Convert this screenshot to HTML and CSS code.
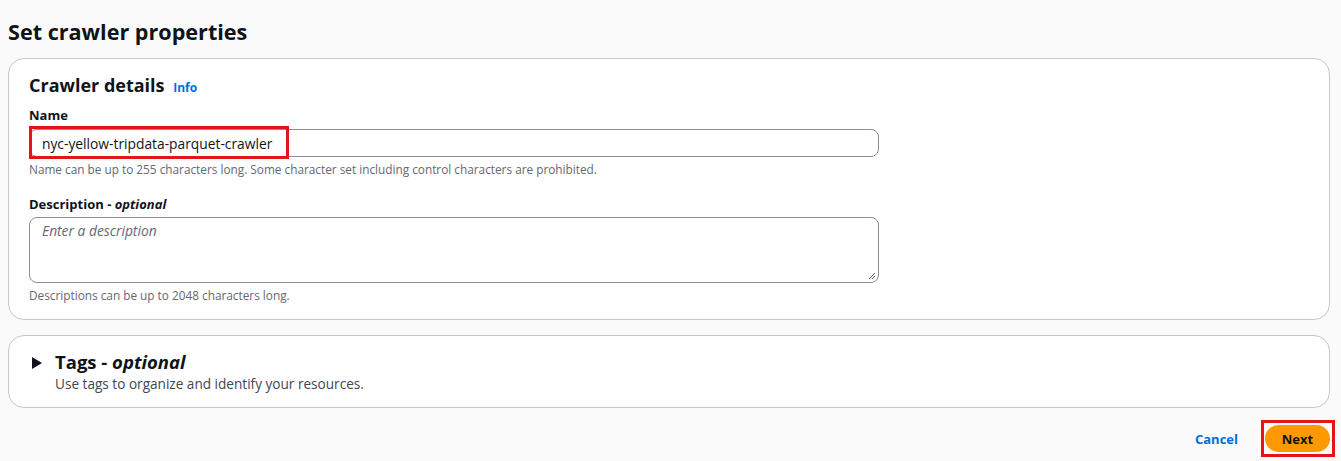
FILE: index.html
```html
<!DOCTYPE html>
<html>
<head>
<meta charset="utf-8">
<link rel="stylesheet" href="styles.css">
</head>
<body>
<main class="page">
  <h1 class="page-title">Set crawler properties</h1>
  <section class="card details">
    <h2 class="card-title">Crawler details <a class="info" href="#">Info</a></h2>
    <div class="field">
      <label class="label">Name</label>
      <div class="input">
        <span class="value">nyc-yellow-tripdata-parquet-crawler</span>
        <span class="hl"></span>
      </div>
      <div class="hint">Name can be up to 255 characters long. Some character set including control characters are prohibited.</div>
    </div>
    <div class="field desc">
      <label class="label">Description - <i>optional</i></label>
      <div class="textarea"><span class="placeholder">Enter a description</span>
        <svg class="grip" width="9" height="9" viewBox="0 0 9 9"><path d="M8 2 L2 8 M8 5 L5 8" stroke="#555" stroke-width="1"/></svg>
      </div>
      <div class="hint">Descriptions can be up to 2048 characters long.</div>
    </div>
  </section>
  <section class="card tags">
    <div class="tags-head">
      <svg class="caret" width="10" height="12" viewBox="0 0 10 12"><path d="M0 0 L10 6 L0 12 Z" fill="#0f141a"/></svg>
      <div>
        <h3 class="tags-title">Tags - <i>optional</i></h3>
        <div class="tags-sub">Use tags to organize and identify your resources.</div>
      </div>
    </div>
  </section>
  <div class="actions">
    <a class="cancel" href="#">Cancel</a>
    <div class="next-hl"><button class="next">Next</button></div>
  </div>
</main>
</body>
</html>
```
FILE: styles.css
```css
* { box-sizing: border-box; }
html, body { margin: 0; padding: 0; }
body {
  background: #fafafa;
  font-family: "Open Sans", "Noto Sans", sans-serif;
  color: #0f141a;
}
.page { padding: 16px 11px 0 8px; }
.page-title {
  margin: 0 0 10px;
  font-size: 21.6px;
  font-weight: 700;
  line-height: 32px;
}
.card {
  background: #fff;
  border: 1px solid #c6c6cd;
  border-radius: 16px;
}
.details { padding: 12px 20px 16px 20px; }
.card-title {
  margin: 0 0 3px;
  font-size: 18px;
  font-weight: 700;
  line-height: 28px;
}
.info {
  font-size: 12px;
  color: #006ce0;
  text-decoration: none;
  font-weight: 700;
  margin-left: 4px;
}
.label {
  display: block;
  font-size: 13px;
  font-weight: 700;
  line-height: 20px;
}
.input {
  margin-top: 4px;
  width: 850px;
  height: 28px;
  border: 1px solid #8c8c94;
  border-radius: 8px;
  background: #fff;
  display: flex;
  align-items: center;
  position: relative;
}
.value {
  font-size: 13.8px;
  padding-left: 12px;
}
.hl {
  position: absolute;
  left: -1px;
  top: -4px;
  width: 260px;
  height: 33px;
  border: 3px solid #e3141b;
}
.hint {
  font-size: 11.8px;
  color: #656871;
  line-height: 16px;
  margin-top: 4px;
}
.desc { margin-top: 17px; }
.textarea {
  margin-top: 3px;
  width: 850px;
  height: 66px;
  border: 1px solid #8c8c94;
  border-radius: 8px;
  padding: 1px 12px;
  position: relative;
}
.placeholder {
  font-style: italic;
  color: #656871;
  font-size: 13.8px;
}
.grip { position: absolute; right: 2px; bottom: 2px; }
.tags { margin-top: 15px; padding: 14px 20px 13px 23px; }
.tags-head { display: flex; align-items: flex-start; gap: 13px; }
.caret { margin-top: 7px; }
.tags-title {
  margin: 0;
  font-size: 18.5px;
  font-weight: 700;
  line-height: 24px;
}
.tags-sub {
  font-size: 13.6px;
  color: #414750;
  line-height: 20px;
}
.actions {
  display: flex;
  justify-content: flex-end;
  align-items: center;
  gap: 23px;
  margin-top: 12px;
  margin-right: -5px;
}
.cancel {
  color: #006ce0;
  font-weight: 700;
  font-size: 13px;
  text-decoration: none;
}
.next-hl {
  border: 3px solid #e3141b;
  padding: 2px 2px 2px 1px;
}
.next {
  background: #ff9900;
  border: none;
  border-radius: 20px;
  width: 65px;
  height: 27px;
  font-family: inherit;
  font-weight: 700;
  font-size: 13px;
  color: #0f141a;
}
```
